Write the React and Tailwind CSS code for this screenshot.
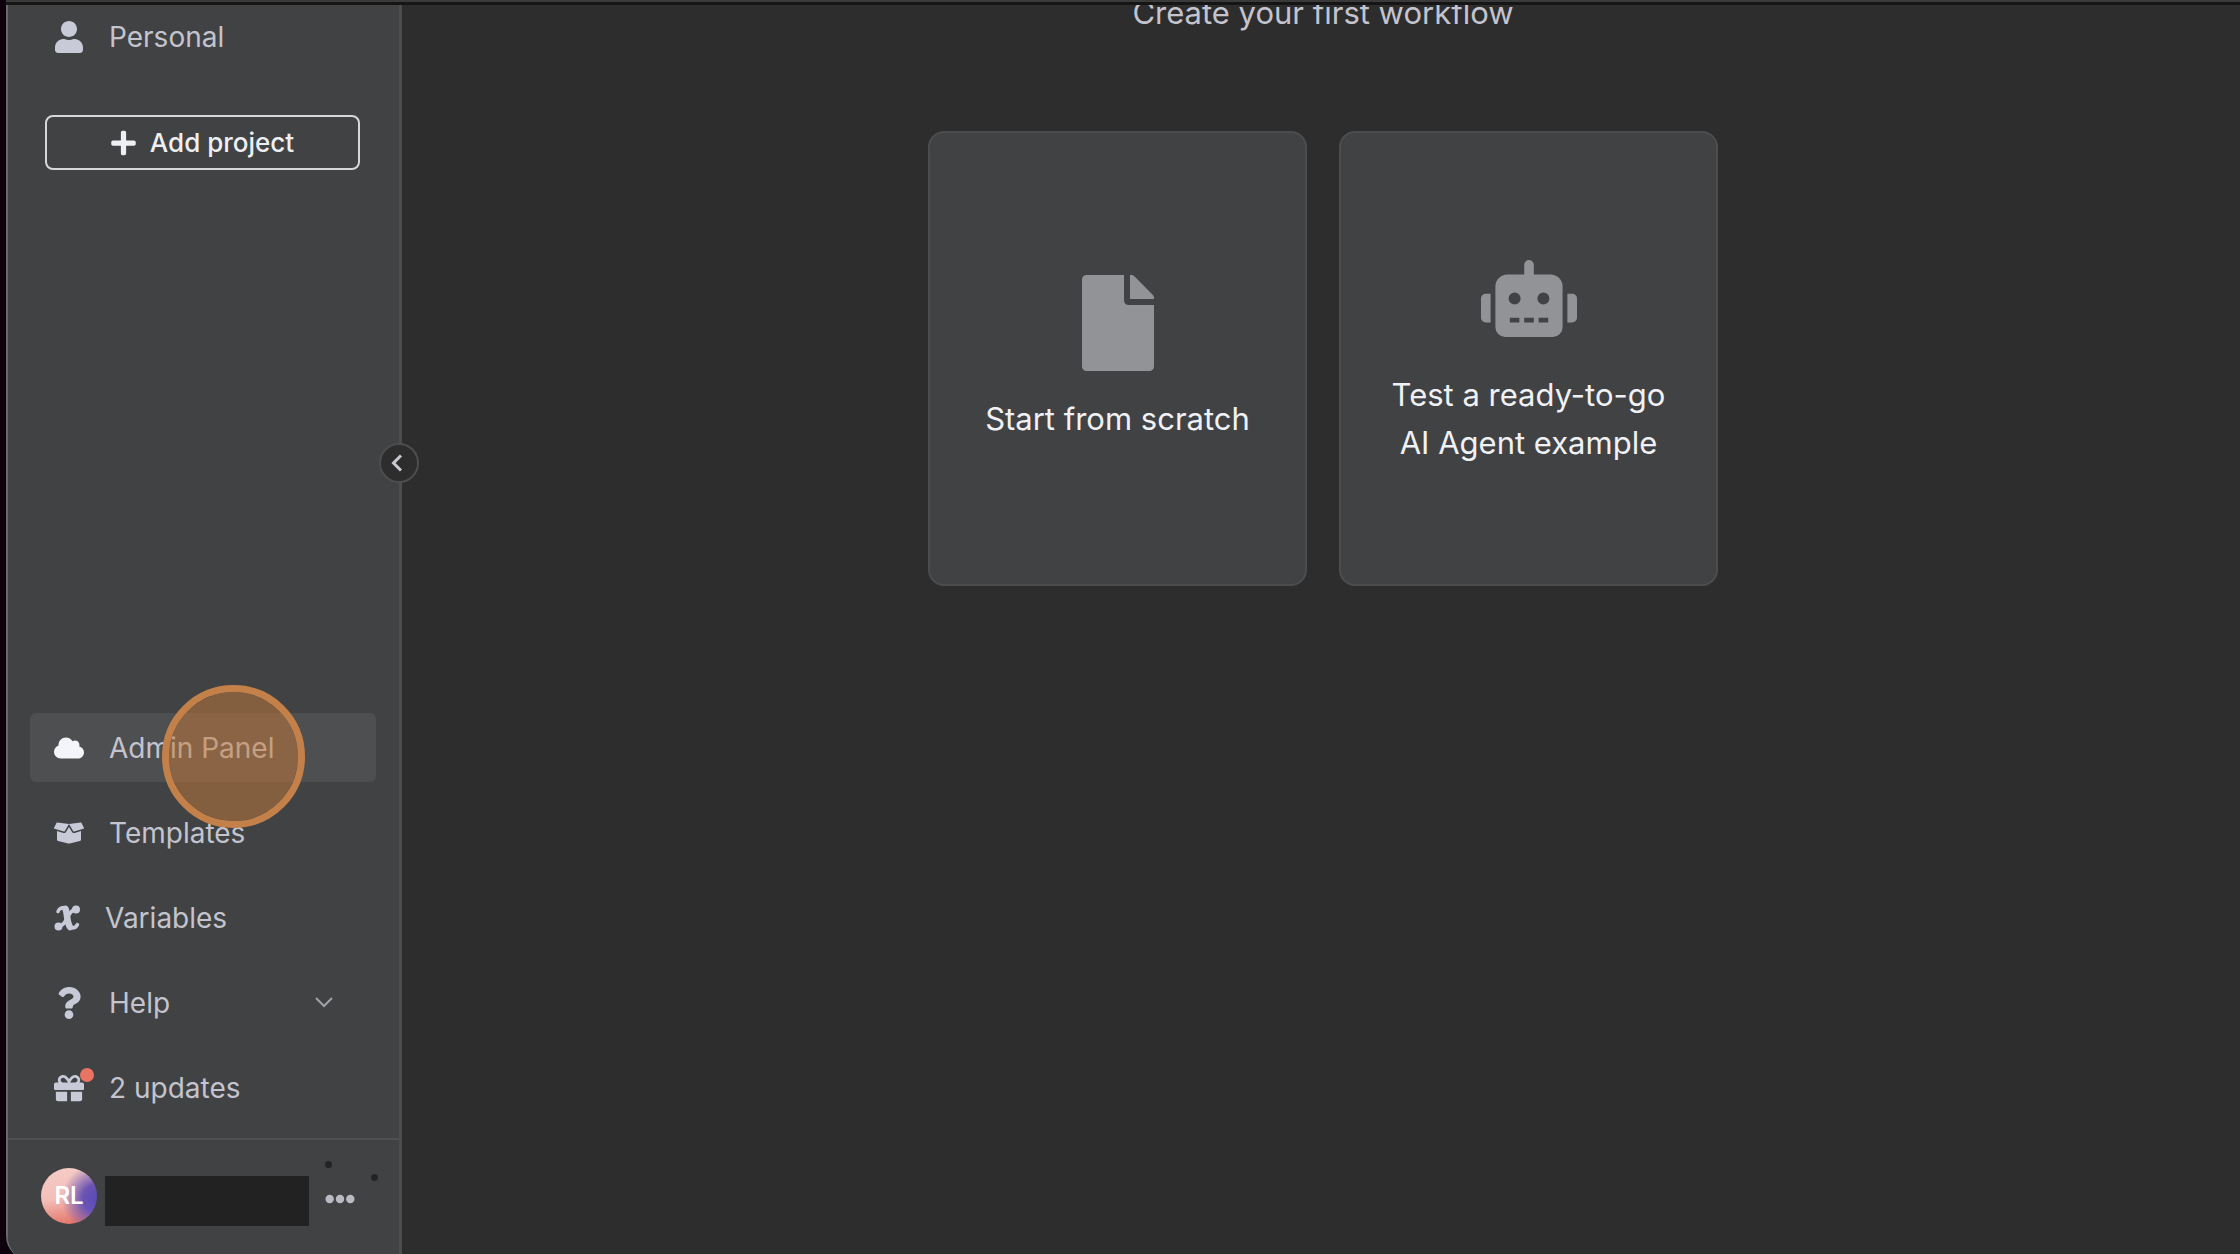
import React from "react";
import {
  FaUser,
  FaPlus,
  FaCloud,
  FaBoxOpen,
  FaQuestion,
  FaGift,
  FaEllipsisH,
  FaFile,
  FaRobot,
} from "react-icons/fa";

function VariableIcon({ className }) {
  return (
    <svg viewBox="0 0 26 26" className={className} fill="none" stroke="currentColor" strokeLinecap="round" strokeLinejoin="round" aria-hidden="true">
      <path d="M4 6.500C5 3.500 7.500 2.500 11 2.500C13.500 5 12.500 10 13.500 14C14 19 14.500 22.500 18 23C20.500 23 22.500 22 23.500 19.500" strokeWidth="3.500" />
      <path d="M11.500 4C13.500 8 12.500 17 16 22" strokeWidth="6.500" />
      <path d="M22.500 4C18 4 16 8 13.500 12.500C11 17 9 21.500 4 21.500" strokeWidth="3.500" />
      <circle cx="22" cy="4.500" r="4" fill="currentColor" stroke="none" />
      <circle cx="4.500" cy="21.500" r="4" fill="currentColor" stroke="none" />
    </svg>
  );
}

function NavItem({ icon, label, active, children, narrow }) {
  return (
    <li className="relative">
      <a
        href="#"
        className={`flex h-[69px] items-center rounded-md pl-6 pr-[43px] text-[28px] leading-9 text-[#c3c4cd] ${active ? "bg-[#4e4f51]" : ""}`}
      >
        <span className={`relative mr-[25px] flex shrink-0 justify-center ${narrow ? "w-[26px]" : "w-[30px]"} ${active ? "text-[#f4f5fb]" : "text-[#c8cad8]"}`}>
          {icon}
        </span>
        <span className="flex-1">{label}</span>
        {children}
      </a>
      {active && (
        <span className="pointer-events-none absolute -top-7 left-[132px] z-10 size-[143px] rounded-full border-[7px] border-[#c38149] bg-[#c57a3a]/50 bg-clip-padding" />
      )}
    </li>
  );
}

function Sidebar() {
  return (
    <aside className="relative flex w-[394px] shrink-0 flex-col border-r-[3px] border-[#4c4d4f] bg-[#414244]">
      <nav aria-label="Projects" className="px-[22px]">
        <ul>
          <li>
            <a href="#" className="flex h-16 items-center pl-6 text-[28px] leading-9 text-[#c3c4cd]">
              <span className="mr-[25px] flex w-[30px] justify-center text-[#c8cad8]">
                <FaUser className="size-8" />
              </span>
              Personal
            </a>
          </li>
        </ul>
      </nav>
      <div className="mt-[46px] pl-[37px] pr-[39px]">
        <button className="flex h-[55px] w-full items-center justify-center gap-3.5 rounded-lg border-2 border-[#d6d7da] text-[26px] leading-8 font-medium text-[#eeeff2]">
          <FaPlus className="h-7 w-[25px]" />
          Add project
        </button>
      </div>
      <nav aria-label="General" className="mt-auto pl-[22px] pr-[23px]">
        <ul className="flex flex-col gap-4">
          <NavItem icon={<FaCloud className="size-8" />} label="Admin Panel" active />
          <NavItem icon={<FaBoxOpen className="size-8" />} label="Templates" />
          <NavItem icon={<VariableIcon className="size-[26px]" />} label="Variables" narrow />
          <NavItem icon={<FaQuestion className="size-8" />} label="Help">
            <svg viewBox="0 0 18 11" className="h-[11px] w-[18px]" fill="none" stroke="#a0a1a9" strokeWidth="2" aria-hidden="true">
              <path d="M1 1L9 9L17 1" />
            </svg>
          </NavItem>
          <NavItem
            icon={
              <>
                <FaGift className="size-8" />
                <span className="absolute -top-1 -right-2.5 size-3.5 rounded-full bg-[#e87461]" />
              </>
            }
            label="2 updates"
          />
        </ul>
      </nav>
      <div className="mt-4 flex h-[122px] shrink-0 items-start border-t-2 border-[#4f5052] pt-7 pl-[33px]">
        <span className="flex size-14 items-center justify-center rounded-full bg-[radial-gradient(circle_at_100%_55%,#5a4ab8_0%,#6a53b4_22%,transparent_55%),linear-gradient(170deg,#f6cdc8_0%,#f3bfb9_50%,#e2695b_100%)] text-2xl font-semibold text-white">
          RL
        </span>
        <span className="mt-2 ml-2 h-[50px] w-[204px] bg-[#222222]" />
        <div className="relative mt-4 ml-4">
          <button aria-label="Account menu" className="block text-[#b9bac4]">
            <FaEllipsisH className="size-[30px]" />
          </button>
          <span className="absolute -top-[23px] left-0 size-[7px] rounded-full bg-[#242424]" />
          <span className="absolute -top-[10px] left-[46px] size-[7px] rounded-full bg-[#242424]" />
        </div>
      </div>
      <button
        aria-label="Collapse sidebar"
        className="absolute top-[438px] -right-5 z-10 flex size-10 items-center justify-center rounded-full border-2 border-[#4c4d4f] bg-[#2d2d2d] pr-1 text-[#c8c9d2]"
      >
        <svg viewBox="0 0 12 18" className="h-[18px] w-3" fill="none" stroke="currentColor" strokeWidth="3" aria-hidden="true">
          <path d="M10 1.500L2.500 9L10 16.500" />
        </svg>
      </button>
    </aside>
  );
}

function StartCard({ icon, children }) {
  return (
    <button className="flex h-[455px] w-[379px] flex-col items-center justify-center gap-6 rounded-2xl border-2 border-[#4c4d4f] bg-[#414244] text-[31px] leading-[48px] text-[#f0f1f4]">
      <span className="flex h-24 items-center text-[#929397]">{icon}</span>
      <span>{children}</span>
    </button>
  );
}

export default function App() {
  return (
    <div className="flex h-screen flex-col overflow-hidden bg-[#0e010e] font-['Inter',sans-serif]">
      <div className="ml-1.5 h-[5px] shrink-0 border-b-[3px] border-[#151515] bg-[#3a3a3a]" />
      <div className="-mb-1.5 ml-1.5 flex min-h-0 flex-1 overflow-hidden rounded-bl-3xl border-l-2 border-[#69696b] bg-[#2d2d2d]">
        <Sidebar />
        <main className="flex min-w-0 flex-1 flex-col items-center overflow-hidden pl-1">
          <h1 className="-mt-4 text-[31px] leading-[48px] text-[#c3c4cd]">Create your first workflow</h1>
          <div className="mt-[94px] flex gap-8">
            <StartCard icon={<FaFile className="h-24 w-[72px]" />}>Start from scratch</StartCard>
            <StartCard icon={<FaRobot className="h-[77px] w-24" />}>
              Test a ready-to-go
              <br />
              AI Agent example
            </StartCard>
          </div>
        </main>
      </div>
    </div>
  );
}
